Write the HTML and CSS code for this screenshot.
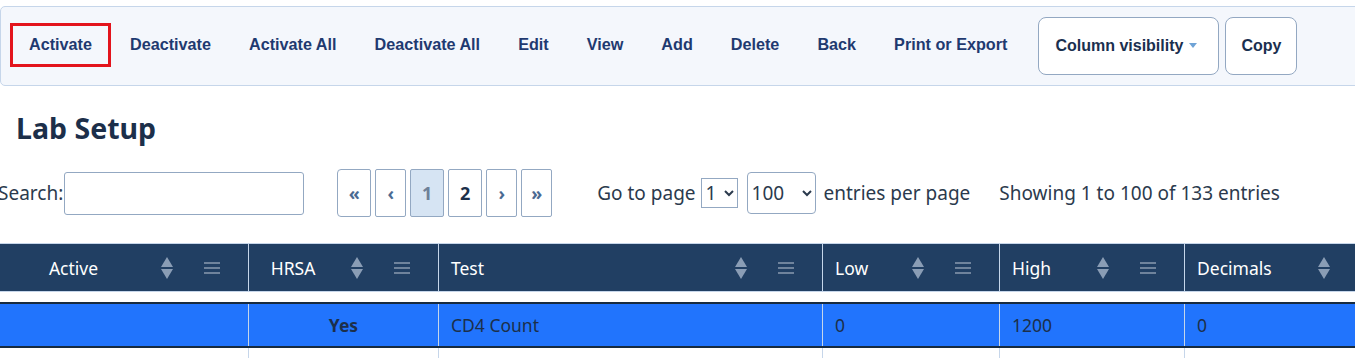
FILE: index.html
```html
<!DOCTYPE html>
<html lang="en">
<head>
    <meta charset="UTF-8">
    <meta name="viewport" content="width=device-width, initial-scale=1.0">
    <title>Lab Setup</title>
    <link rel="stylesheet" href="styles.css">
</head>
<body>
    <!-- Action Toolbar -->
    <div class="toolbar">
        <button class="tool-button focused">Activate</button>
        <button class="tool-button">Deactivate</button>
        <button class="tool-button">Activate All</button>
        <button class="tool-button">Deactivate All</button>
        <button class="tool-button">Edit</button>
        <button class="tool-button">View</button>
        <button class="tool-button">Add</button>
        <button class="tool-button">Delete</button>
        <button class="tool-button">Back</button>
        <button class="tool-button">Print or Export</button>
        <button class="box-button colvis">Column visibility <span class="caret"></span></button>
        <button class="box-button copy">Copy</button>
    </div>

    <h1 class="page-title">Lab Setup</h1>

    <!-- Table Controls -->
    <div class="controls">
        <label class="search">Search:<input type="text" class="search-input"></label>
        <div class="pager">
            <button class="page-btn arrow">&laquo;</button>
            <button class="page-btn arrow">&lsaquo;</button>
            <button class="page-btn current">1</button>
            <button class="page-btn">2</button>
            <button class="page-btn arrow">&rsaquo;</button>
            <button class="page-btn arrow">&raquo;</button>
        </div>
        <div class="goto">
            Go to page
            <select class="page-select"><option>1</option><option>2</option></select>
            <select class="size-select"><option>100</option></select>
            entries per page
        </div>
        <div class="info">Showing 1 to 100 of 133 entries</div>
    </div>

    <!-- Data Table -->
    <table class="grid">
        <thead>
            <tr>
                <th class="col-active centered"><div class="th-inner"><span class="th-label">Active</span><span class="sort"></span><span class="menu"></span></div></th>
                <th class="col-hrsa centered"><div class="th-inner"><span class="th-label">HRSA</span><span class="sort"></span><span class="menu"></span></div></th>
                <th class="col-test"><div class="th-inner"><span class="th-label">Test</span><span class="sort"></span><span class="menu"></span></div></th>
                <th class="col-low"><div class="th-inner"><span class="th-label">Low</span><span class="sort"></span><span class="menu"></span></div></th>
                <th class="col-high"><div class="th-inner"><span class="th-label">High</span><span class="sort"></span><span class="menu"></span></div></th>
                <th class="col-dec"><div class="th-inner"><span class="th-label">Decimals</span><span class="sort"></span><span class="menu"></span></div></th>
            </tr>
        </thead>
        <tbody>
            <tr class="spacer"><td colspan="6"></td></tr>
            <tr class="selected">
                <td></td>
                <td class="yes">Yes</td>
                <td>CD4 Count</td>
                <td>0</td>
                <td>1200</td>
                <td>0</td>
            </tr>
            <tr>
                <td></td><td></td><td></td><td></td><td></td><td></td>
            </tr>
        </tbody>
    </table>
</body>
</html>
```

FILE: styles.css
```css
body {
    margin: 0;
    overflow: hidden;
    font-family: 'Noto Sans', 'Open Sans', sans-serif;
    color: #2b3a4d;
    background: #fff;
}

/* Toolbar */
.toolbar {
    margin-top: 6px;
    width: 1400px;
    height: 78px;
    display: flex;
    align-items: center;
    padding-left: 9px;
    background: #f4f7fc;
    border: 1px solid #c6d6ea;
    border-radius: 5px;
    box-sizing: content-box;
}

.tool-button {
    height: 44px;
    padding: 0 17px;
    margin-top: -3px;
    background: none;
    border: 2px solid transparent;
    font-family: 'Liberation Sans', Arial, sans-serif;
    font-weight: bold;
    font-size: 16.2px;
    color: #1f3a70;
    cursor: pointer;
}

.tool-button.focused {
    border: 3px solid #e3141c;
    padding: 0 16px;
}

.box-button {
    height: 58px;
    margin-top: 0;
    background: #fff;
    border: 1px solid #93a8c2;
    border-radius: 8px;
    font-family: 'Liberation Sans', Arial, sans-serif;
    font-weight: bold;
    font-size: 16px;
    color: #1a2f4f;
    cursor: pointer;
}

.colvis {
    width: 181px;
    margin-left: 12px;
    padding: 0 0 0 16px;
    text-align: left;
}

.copy {
    width: 72px;
    margin-left: 6px;
}

.caret {
    display: inline-block;
    vertical-align: middle;
    margin: -3px 0 0 1px;
    border-left: 4px solid transparent;
    border-right: 4px solid transparent;
    border-top: 5px solid #6fa3d6;
}

/* Title */
.page-title {
    margin: 22px 0 0 16px;
    height: 40px;
    font-size: 28.5px;
    font-weight: bold;
    color: #1c2f4a;
    line-height: 40px;
}

/* Controls row */
.controls {
    display: flex;
    align-items: center;
    margin-top: 21px;
    height: 48px;
    font-size: 19px;
    color: #2b3a4d;
}

.search {
    display: flex;
    align-items: center;
    margin-left: -2px;
}

.search-input {
    width: 240px;
    height: 43px;
    margin-left: 1px;
    box-sizing: border-box;
    border: 1px solid #93a8c2;
    border-radius: 3px;
}

.pager {
    display: flex;
    gap: 4px;
    margin-left: 33px;
}

.page-btn {
    width: 34px;
    height: 48px;
    padding: 0;
    background: #fff;
    border: 1px solid #93a8c2;
    border-radius: 2px;
    font-family: 'Noto Sans', sans-serif;
    font-weight: bold;
    font-size: 18px;
    color: #1c2f4a;
}

.page-btn.arrow {
    width: 31px;
    color: #4a6a92;
}

.page-btn.arrow:first-child {
    width: 34px;
    border-radius: 4px 2px 2px 4px;
}

.page-btn.current {
    background: #d6e4f3;
    color: #6e8098;
}

.goto {
    display: flex;
    align-items: center;
    margin-left: 45px;
}

.page-select {
    width: 37px;
    height: 30px;
    margin: 0 9px 0 5px;
    border: 1px solid #93a8c2;
    border-radius: 0;
    background: #fff;
    font-family: 'Noto Sans', sans-serif;
    font-size: 19px;
    color: #2b3a4d;
}

.size-select {
    width: 69px;
    height: 42px;
    margin-right: 8px;
    border: 1px solid #93a8c2;
    border-radius: 4px;
    background: #fff;
    font-family: 'Noto Sans', sans-serif;
    font-size: 19px;
    color: #2b3a4d;
}

.info {
    margin-left: 29px;
}

/* Table */
.grid {
    margin-top: 26px;
    border-collapse: collapse;
    table-layout: fixed;
    width: 1400px;
    font-size: 17.5px;
}

.grid th {
    height: 47px;
    padding: 0;
    background: #213f63;
    color: #fff;
    font-weight: normal;
    text-align: left;
    border-top: 1px solid #c6d6ea;
    border-left: 1px solid #c6d6ea;
    border-bottom: 1px solid #c6d6ea;
}

.grid th:first-child {
    border-left: none;
}

.col-active { width: 248px; }
.col-hrsa { width: 189px; }
.col-test { width: 383px; }
.col-low { width: 176px; }
.col-high { width: 184px; }
.col-dec { width: 220px; }

.th-inner {
    display: flex;
    align-items: center;
    padding: 0 28px 0 12px;
}

.th-label {
    flex: 1;
}

.centered .th-inner {
    padding-left: 0;
}

.centered .th-label {
    text-align: center;
    padding-right: 14px;
}

.sort {
    position: relative;
    width: 12px;
    height: 22px;
    margin-right: 31px;
}

.sort::before,
.sort::after {
    content: "";
    position: absolute;
    left: 0;
    border-left: 6px solid transparent;
    border-right: 6px solid transparent;
}

.sort::before {
    top: 0;
    border-bottom: 10px solid #8a9db5;
}

.sort::after {
    bottom: 0;
    border-top: 10px solid #8a9db5;
}

.menu {
    width: 16px;
    height: 12px;
    background: linear-gradient(#6f839c 0 2px, transparent 2px 5px, #6f839c 5px 7px, transparent 7px 10px, #6f839c 10px 12px);
}

.grid td {
    padding: 0 12px;
    border-left: 1px solid #c6d6ea;
    color: #1c2f4a;
}

.grid td:first-child {
    border-left: none;
}

.grid .spacer td {
    height: 10px;
    padding: 0;
    border: none;
}

.grid .selected td {
    height: 42px;
    background: #2174fd;
    border-top: 2px solid #172b40;
    border-bottom: 2px solid #172b40;
}

.grid td.yes {
    text-align: center;
    font-weight: bold;
}

.grid tr:last-child td {
    height: 40px;
}
```
